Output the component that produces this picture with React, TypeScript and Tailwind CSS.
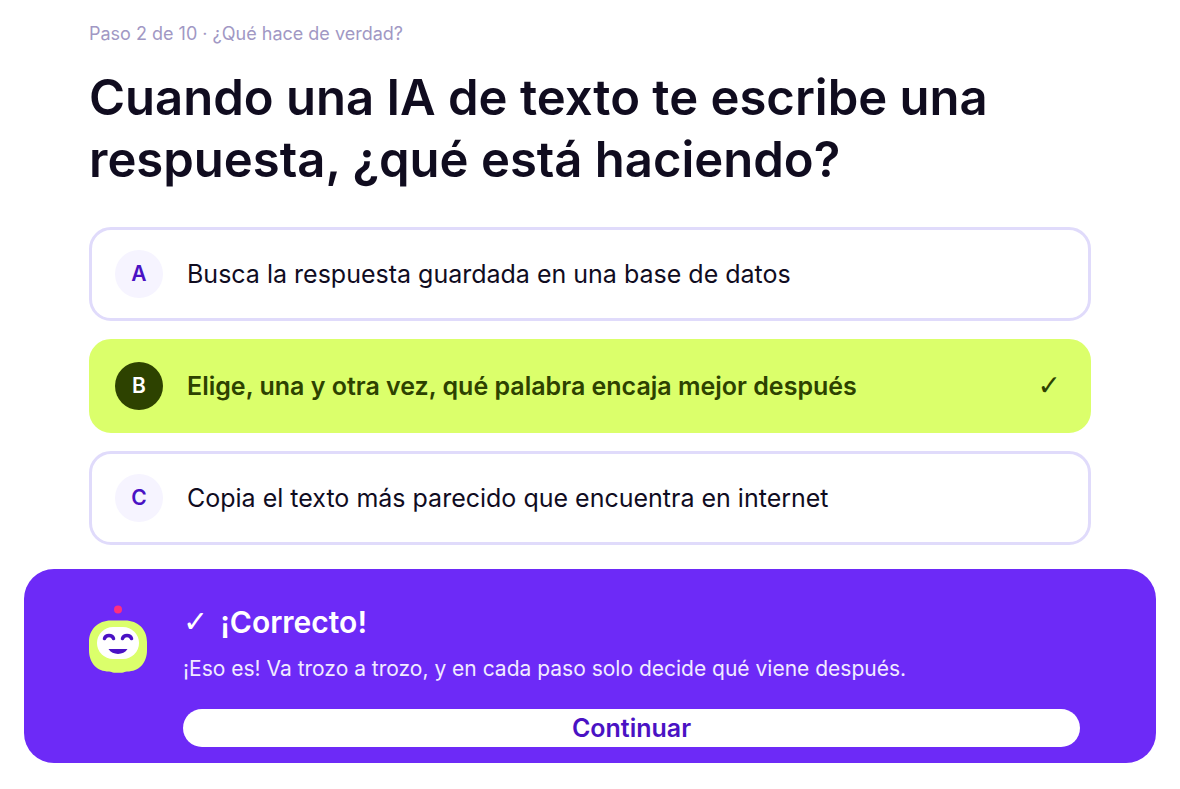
import { useState } from 'react';

const OPTIONS = [
  { letter: 'A', text: 'Busca la respuesta guardada en una base de datos' },
  { letter: 'B', text: 'Elige, una y otra vez, qué palabra encaja mejor después' },
  { letter: 'C', text: 'Copia el texto más parecido que encuentra en internet' },
];

const CORRECT = 'B';

function Robot() {
  return (
    <svg viewBox="0 0 58 68" className="w-[58px] h-[68px] shrink-0" aria-hidden="true">
      <circle cx="29" cy="4.500" r="4" fill="#ff2e7e" />
      <path
        d="M22 15.500h14c13 0 22 9 22 21.500v8c0 13-8 21.500-20 21.500-2 0-3 1.200-5 1.200h-8c-2 0-3-1.200-5-1.200C8 66.500 0 58 0 45v-8c0-12.500 9-21.500 22-21.500Z"
        fill="#dbff6b"
      />
      <rect x="8" y="22" width="42" height="32" rx="16" fill="#fff" />
      <path
        d="M15.500 33.500a4.700 4.200 0 0 1 9 0M33.500 33.500a4.700 4.200 0 0 1 9 0"
        fill="none"
        stroke="#4a12c4"
        strokeWidth="3.500"
        strokeLinecap="round"
      />
      <path d="M19.500 44h19c-4 6.500-15 6.500-19 0Z" fill="#4a12c4" />
    </svg>
  );
}

export default function App() {
  const [selected, setSelected] = useState('B');
  const isCorrect = selected === CORRECT;

  return (
    <main className="bg-white font-['Inter',sans-serif] px-6 pt-[21px] pb-6 text-[#100c1f]">
      <section className="px-[65px]">
        <p className="text-[18px] leading-[26px] text-[#a198c4]">Paso 2 de 10 · ¿Qué hace de verdad?</p>
        <h1 className="mt-5 text-[49px] leading-[62px] font-semibold">
          Cuando una IA de texto te escribe una respuesta, ¿qué está haciendo?
        </h1>

        {/* Opciones */}
        <div className="mt-9 flex flex-col gap-[18px]">
          {OPTIONS.map((o) => {
            const active = o.letter === selected;
            return (
              <button
                key={o.letter}
                type="button"
                aria-pressed={active}
                onClick={() => setSelected(o.letter)}
                className={`flex items-center gap-6 rounded-[22px] border-[3px] py-5 pl-[23px] pr-[27px] text-left text-[25px] leading-[30px] ${
                  active
                    ? 'border-[#dbff6b] bg-[#dbff6b] font-semibold text-[#2d4200]'
                    : 'border-[#e0dbfb] bg-white'
                }`}
              >
                <span
                  className={`flex size-12 shrink-0 items-center justify-center rounded-full text-[21px] font-semibold ${
                    active ? 'bg-[#2d4200] text-white' : 'bg-[#f6f4ff] text-[#4a12c4]'
                  }`}
                >
                  {o.letter}
                </span>
                <span className="flex-1">{o.text}</span>
                {active && isCorrect && (
                  <span className="font-['DejaVu_Sans',sans-serif] text-[28px] font-semibold">✓</span>
                )}
              </button>
            );
          })}
        </div>
      </section>

      {/* Respuesta */}
      <section className="mt-6 flex items-start gap-9 rounded-[30px] bg-[#6d2af7] pt-9 pr-[76px] pb-4 pl-[65px] text-white">
        <Robot />
        <div className="flex-1">
          <h2 className="flex gap-3 text-[30px] leading-[34px] font-semibold">
            <span className="font-['DejaVu_Sans',sans-serif] font-normal">{isCorrect ? '✓' : '✗'}</span>
            <span>{isCorrect ? '¡Correcto!' : 'Casi'}</span>
          </h2>
          <p className="mt-[14px] text-[21px] leading-[32px] text-[#f1eaff]">
            ¡Eso es! Va trozo a trozo, y en cada paso solo decide qué viene después.
          </p>
          <button
            type="button"
            className="mt-6 w-full rounded-full bg-white text-[25px] leading-[38px] font-semibold text-[#4a12c4]"
          >
            Continuar
          </button>
        </div>
      </section>
    </main>
  );
}
